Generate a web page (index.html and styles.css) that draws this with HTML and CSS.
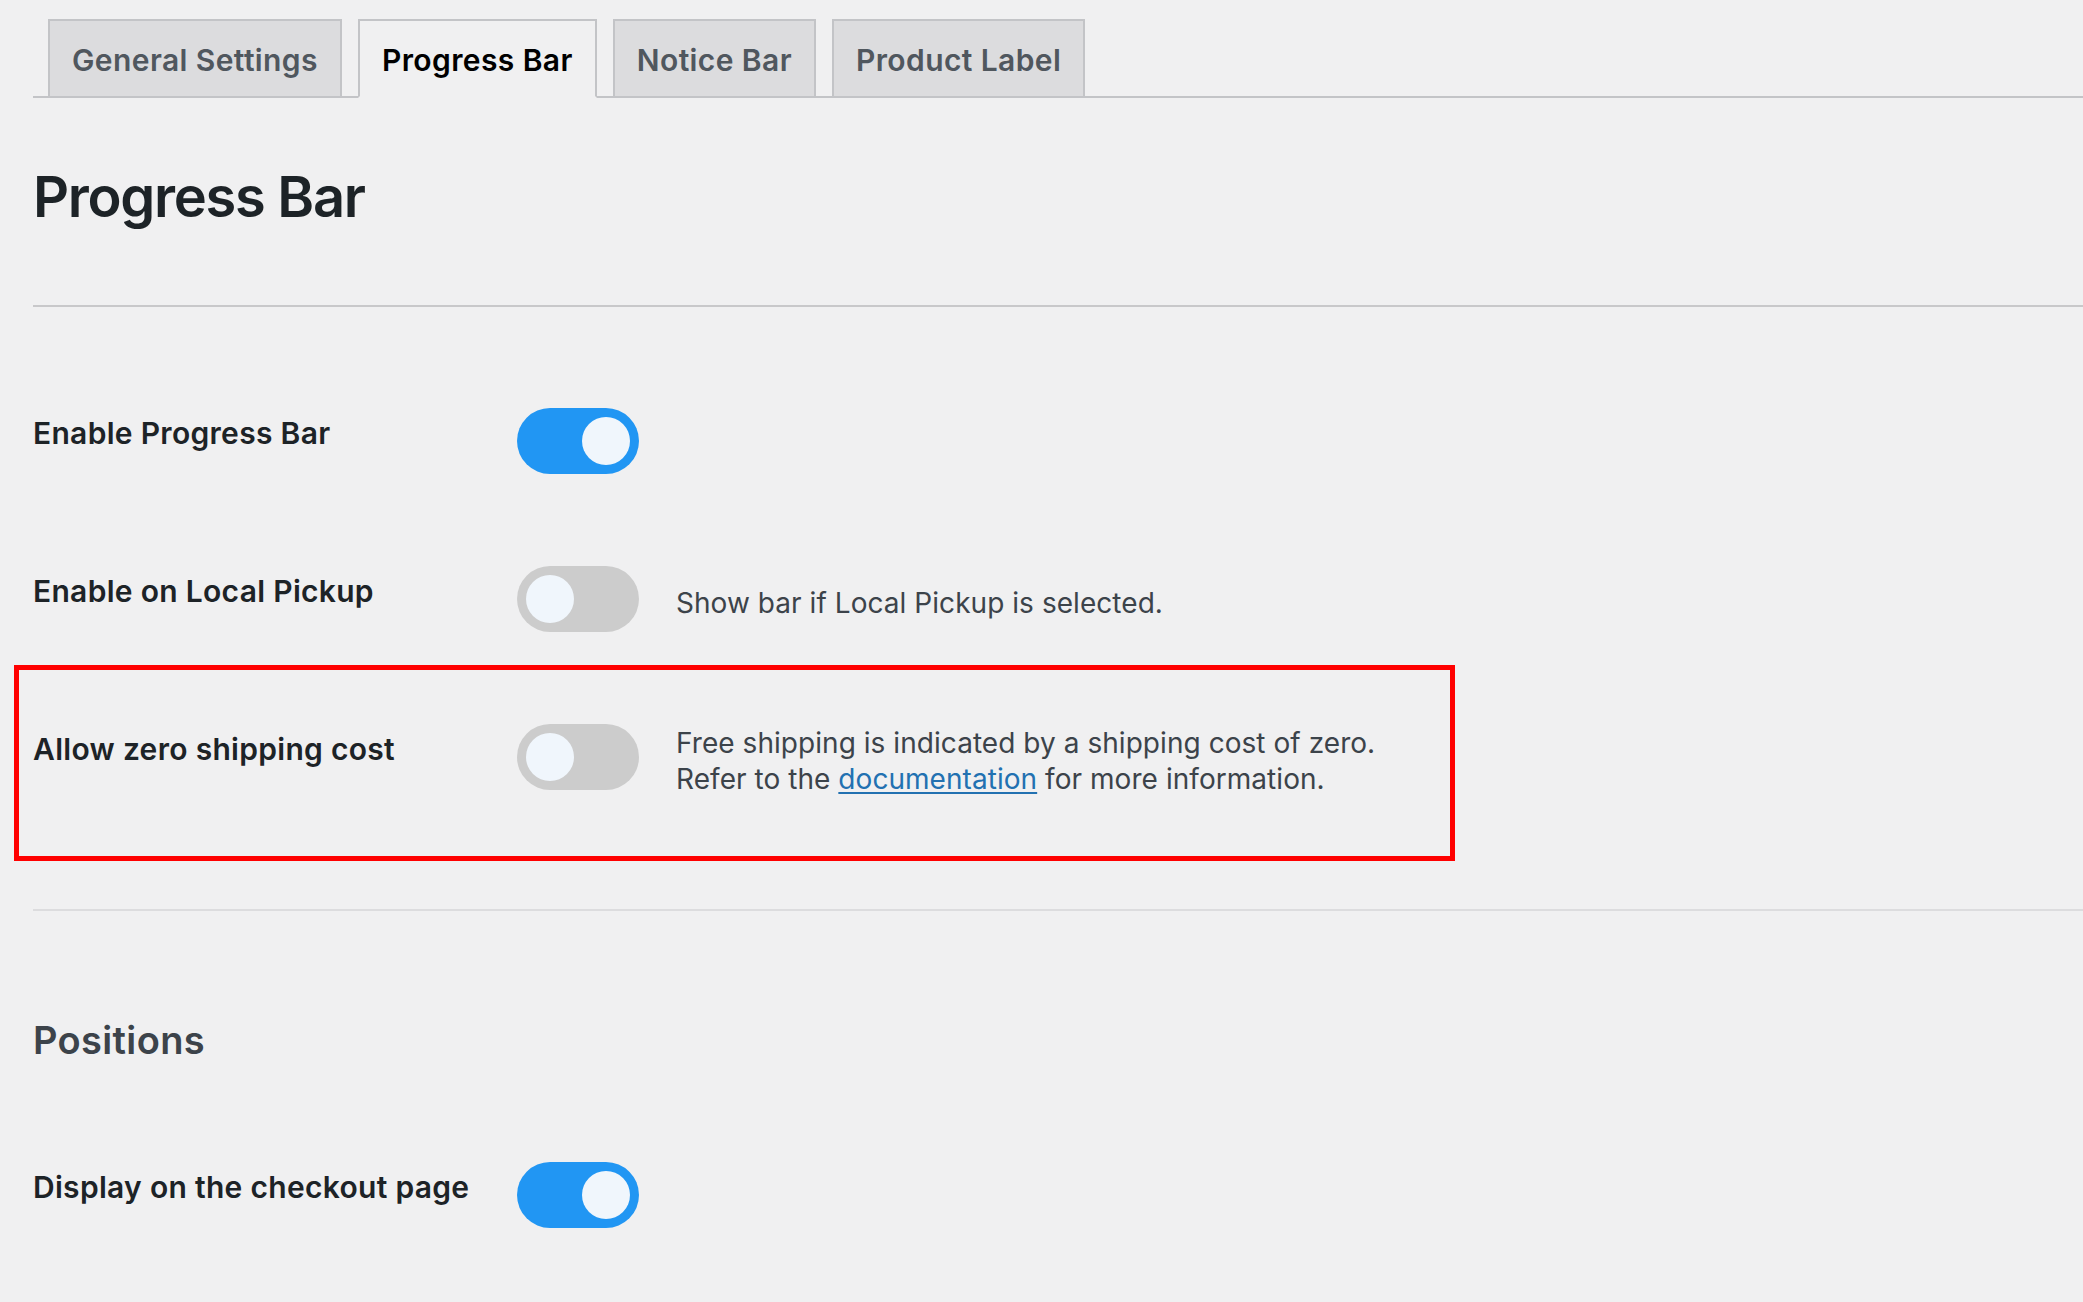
FILE: index.html
```html
<!DOCTYPE html>
<html lang="en">
<head>
<meta charset="utf-8">
<title>Progress Bar Settings</title>
<link rel="stylesheet" href="styles.css">
</head>
<body>
<div class="wrap">
  <nav class="tabs">
    <a class="tab" href="#">General Settings</a>
    <a class="tab tab-active" href="#">Progress Bar</a>
    <a class="tab" href="#">Notice Bar</a>
    <a class="tab" href="#">Product Label</a>
  </nav>

  <h1 class="page-title">Progress Bar</h1>
  <div class="sep sep-strong"></div>

  <div class="rows rows-first">
    <div class="row">
      <div class="label">Enable Progress Bar</div>
      <div class="control">
        <span class="toggle toggle-on"><span class="knob"></span></span>
      </div>
    </div>
    <div class="row">
      <div class="label">Enable on Local Pickup</div>
      <div class="control">
        <span class="toggle"><span class="knob"></span></span>
        <p class="desc">Show bar if Local Pickup is selected.</p>
      </div>
    </div>
    <div class="row">
      <div class="label">Allow zero shipping cost</div>
      <div class="control">
        <span class="toggle"><span class="knob"></span></span>
        <p class="desc">Free shipping is indicated by a shipping cost of zero.<br>Refer to the <a href="#">documentation</a> for more information.</p>
      </div>
    </div>
  </div>

  <div class="sep sep-light"></div>

  <h2 class="section-title">Positions</h2>

  <div class="rows rows-second">
    <div class="row">
      <div class="label">Display on the checkout page</div>
      <div class="control">
        <span class="toggle toggle-on"><span class="knob"></span></span>
      </div>
    </div>
  </div>

  <div class="highlight"></div>
</div>
</body>
</html>
```

FILE: styles.css
```css
* { box-sizing: border-box; }

html, body {
  margin: 0;
  padding: 0;
  background: #f0f0f1;
}

body {
  font-family: "Inter", "Noto Sans", "Liberation Sans", sans-serif;
  color: #1d2327;
  width: 2083px;
  height: 1302px;
  overflow: hidden;
}

.wrap {
  position: relative;
  padding-left: 33px;
  min-height: 1302px;
}

/* Tabs */
.tabs {
  display: flex;
  gap: 16px;
  padding: 19px 0 0 15px;
  border-bottom: 2px solid #c3c4c7;
}

.tab {
  display: flex;
  align-items: center;
  height: 79px;
  margin-bottom: -2px;
  padding: 2px 22px 0;
  border: 2px solid #c3c4c7;
  background: #dcdcde;
  color: #50575e;
  font-size: 30px;
  font-weight: 600;
  letter-spacing: 0.4px;
  text-decoration: none;
}

.tab-active {
  background: #f0f0f1;
  border-bottom-color: #f0f0f1;
  color: #000;
}

/* Headings */
.page-title {
  margin: 66px 0 0;
  font-size: 56px;
  line-height: 67px;
  font-weight: 600;
  letter-spacing: -1.3px;
  color: #1d2327;
}

.section-title {
  margin: 107px 0 0;
  font-size: 38px;
  line-height: 45px;
  font-weight: 600;
  letter-spacing: 0.35px;
  color: #3c434a;
}

.sep { height: 2px; }
.sep-strong { background: #c8c8ca; margin-top: 74px; }
.sep-light { background: #dcdcde; margin-top: 119px; }

/* Rows */
.rows {
  display: flex;
  flex-direction: column;
  gap: 92px;
}
.rows-first { margin-top: 101px; }
.rows-second { margin-top: 99px; }

.row {
  display: grid;
  grid-template-columns: 484px 1fr;
  align-items: start;
  height: 66px;
}

.label {
  margin-top: 7px;
  font-size: 30px;
  line-height: 36px;
  font-weight: 600;
  letter-spacing: 0.3px;
  color: #1d2327;
}

.control {
  display: flex;
  align-items: center;
  gap: 37px;
  height: 66px;
}

.toggle {
  position: relative;
  flex: none;
  display: block;
  width: 122px;
  height: 66px;
  border-radius: 33px;
  background: #cccccc;
}

.knob {
  position: absolute;
  top: 9px;
  left: 9px;
  width: 48px;
  height: 48px;
  border-radius: 50%;
  background: #f0f6fc;
}

.toggle-on { background: #2196f3; }
.toggle-on .knob { left: auto; right: 9px; }

.desc {
  flex: none;
  margin: 0;
  padding-top: 7px;
  font-size: 28px;
  line-height: 36px;
  font-weight: 400;
  letter-spacing: 0.05px;
  color: #3c434a;
}

.desc a {
  color: #2271b1;
  text-decoration: underline;
  text-underline-offset: 3px;
}

/* Annotation box overlaying the third row */
.highlight {
  position: absolute;
  left: 14px;
  top: 665px;
  width: 1441px;
  height: 196px;
  border: 5px solid #ff0000;
  pointer-events: none;
}
```
